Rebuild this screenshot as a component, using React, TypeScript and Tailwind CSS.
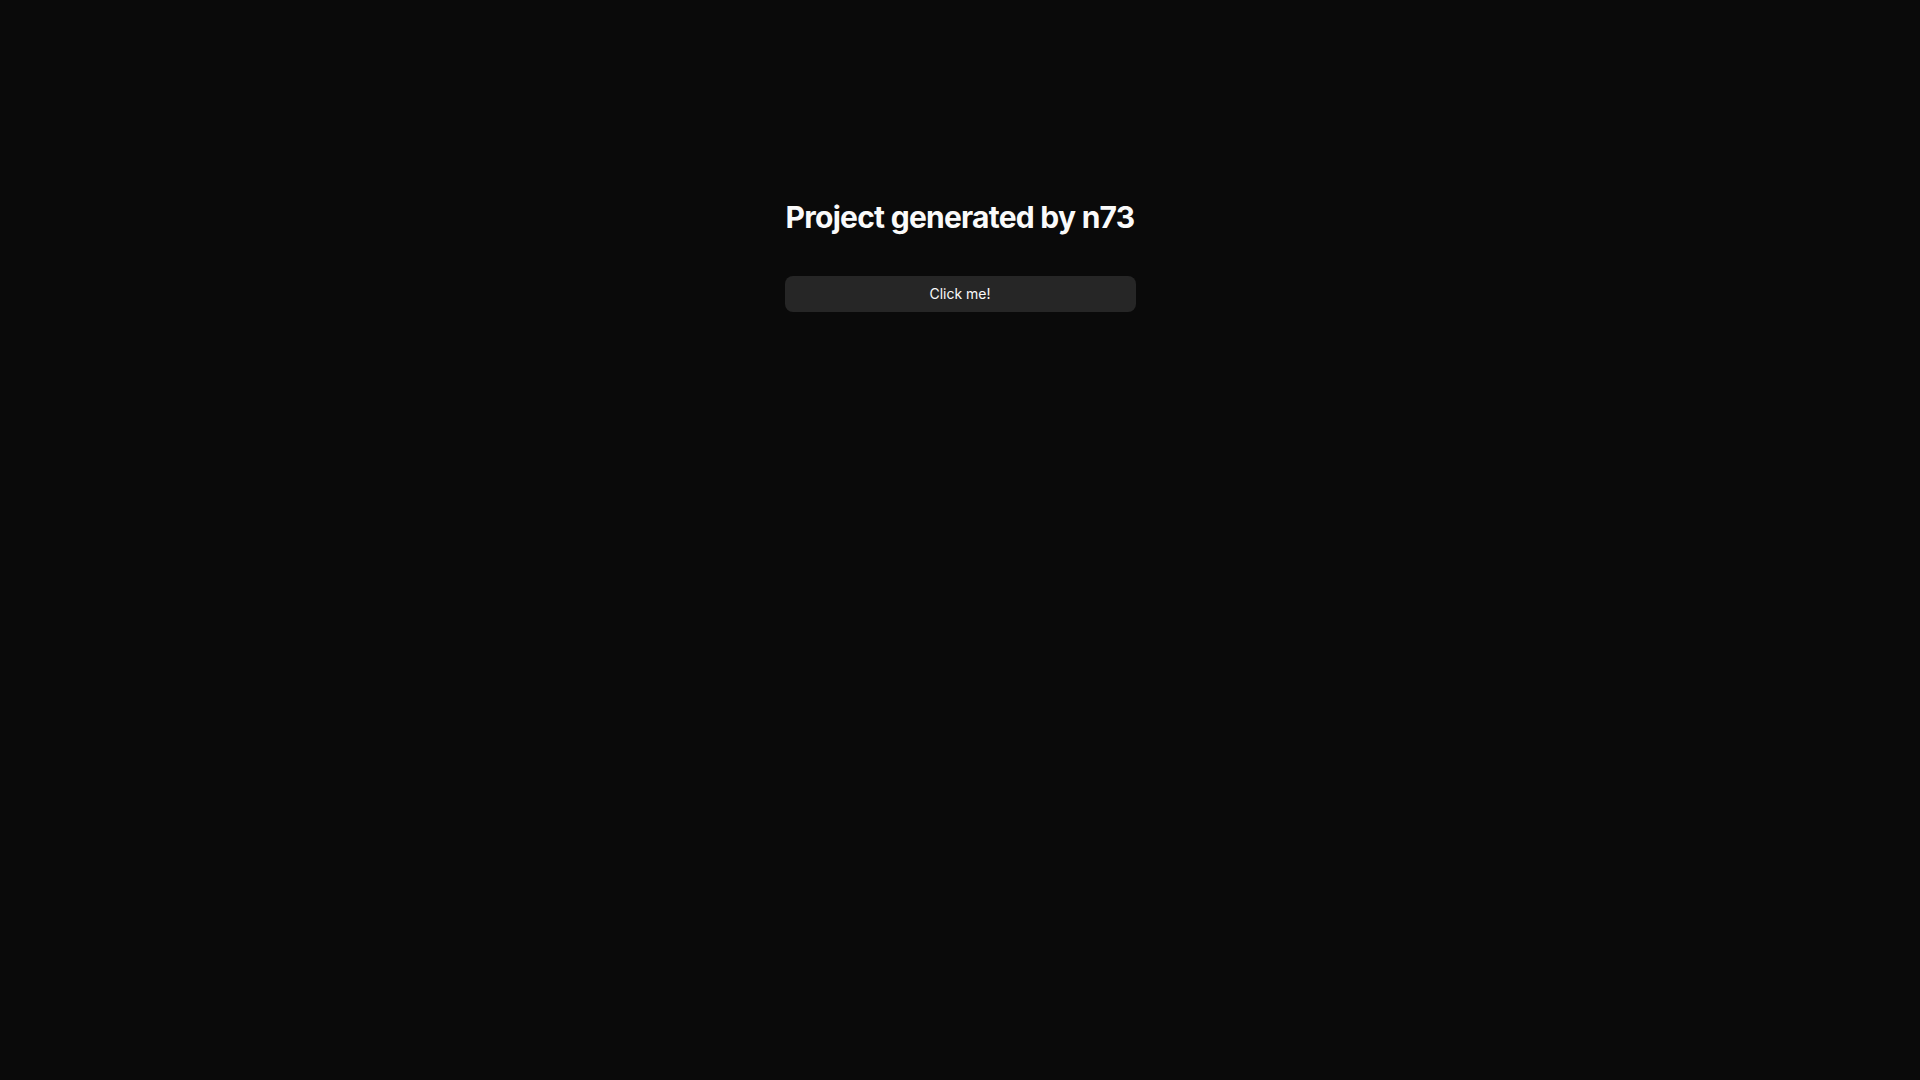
export default function App() {
  return (
    <div className="min-h-screen w-full bg-[#0a0a0a] flex justify-center" style={{ fontFamily: 'Inter, "Noto Sans", sans-serif' }}>
      <div className="w-[351px] pt-[199px] flex flex-col items-center">
        <h1 className="text-[30px] leading-9 font-bold text-[#fafafa] tracking-tight whitespace-nowrap">Project generated by n73</h1>
        <button className="mt-[41px] w-full h-9 rounded-lg bg-[#262626] text-[#fafafa] text-sm font-normal">Click me!</button>
      </div>
    </div>
  );
}
